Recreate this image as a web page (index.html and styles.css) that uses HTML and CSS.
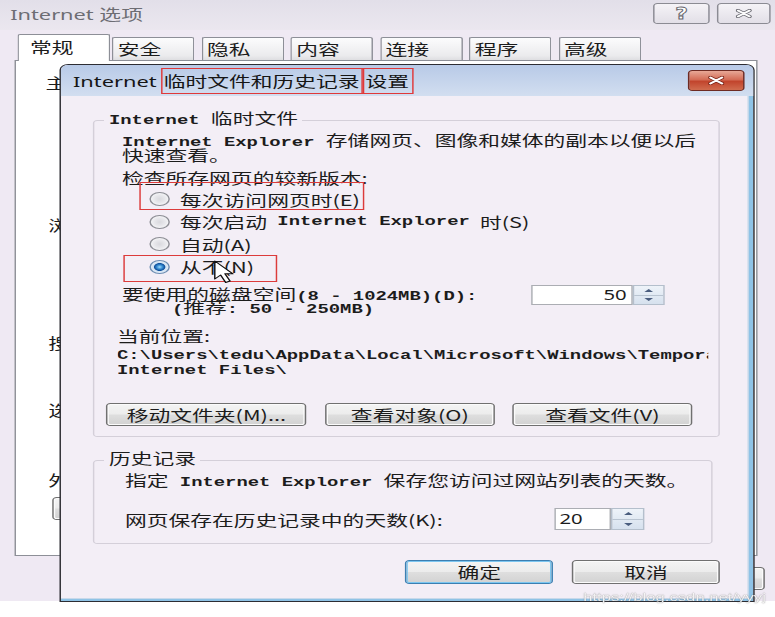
FILE: index.html
```html
<!DOCTYPE html>
<html>
    <head>
        <meta charset="utf-8">
        <title>Internet 选项</title>
        <link rel="stylesheet" href="styles.css">
    </head>
    <body>
        <div class="screen">
            <!-- Internet Options window (behind) -->
            <div class="ie-window">
                <div class="ie-titlebar">
                    <span class="ie-title">Internet 选项</span>
                    <div class="caption-btns">
                        <button class="cap-btn cap-help">?</button>
                        <button class="cap-btn cap-close">
                            <svg width="11" height="9" viewBox="0 0 11 9">
                                <path d="M1.5 1.5 L9.5 7.5 M9.5 1.5 L1.5 7.5" stroke="#6a6a72" stroke-width="3.2" stroke-linecap="round" fill="none" />
                                <path d="M1.5 1.5 L9.5 7.5 M9.5 1.5 L1.5 7.5" stroke="#fdfdfd" stroke-width="1.6" stroke-linecap="round" fill="none" />
                            </svg>
                        </button>
                    </div>
                </div>

                <div class="tabs">
                    <div class="tab tab-active">常规</div>
                    <div class="tab">安全</div>
                    <div class="tab">隐私</div>
                    <div class="tab">内容</div>
                    <div class="tab">连接</div>
                    <div class="tab">程序</div>
                    <div class="tab">高级</div>
                </div>

                <div class="tab-panel">
                    <div class="panel-label sec-home">主页</div>
                    <div class="panel-label sec-history">浏览历史记录</div>
                    <div class="panel-label sec-search">搜索</div>
                    <div class="panel-label sec-tabs">选项卡</div>
                    <div class="panel-label sec-look">外观</div>
                    <button class="btn panel-btn" aria-label="颜色"></button>
                </div>

                <!-- only the edge of the last button shows past the dialog -->
                <div class="ie-footer">
                    <button class="btn" aria-label="确定"></button>
                    <button class="btn" aria-label="取消"></button>
                    <button class="btn" aria-label="应用"></button>
                </div>
            </div>

            <!-- Temporary files and history settings dialog -->
            <div class="dialog">
                <div class="dialog-titlebar">
                    <span class="dialog-title">Internet <span class="mark mark-left">临时文件和历史记录</span><span class="mark mark-right">设置</span></span>
                    <button class="dialog-close">
                        <svg width="11" height="9" viewBox="0 0 11 9">
                            <path d="M1.5 1.5 L9.5 7.5 M9.5 1.5 L1.5 7.5" stroke="#7a2418" stroke-width="3.4" stroke-linecap="round" fill="none" />
                            <path d="M1.5 1.5 L9.5 7.5 M9.5 1.5 L1.5 7.5" stroke="#fff" stroke-width="1.8" stroke-linecap="round" fill="none" />
                        </svg>
                    </button>
                </div>

                <div class="dialog-body">
                    <fieldset class="group cache">
                        <legend><span class="en">Internet </span>临时文件</legend>
                        <p class="cache-desc"><span class="en">Internet Explorer </span>存储网页、图像和媒体的副本以便以后<br>快速查看。</p>
                        <div class="check-title">检查所存网页的较新版本:</div>

                        <div class="radio-row"><span class="radio"></span>每次访问网页时(E)</div>
                        <div class="radio-row"><span class="radio"></span>每次启动<span class="en"> Internet Explorer </span>时(S)</div>
                        <div class="radio-row"><span class="radio"></span>自动(A)</div>
                        <div class="radio-row"><span class="radio checked"></span>从不(N)</div>

                        <div class="disk-row">
                            <div class="disk-text">
                                <div>要使用的磁盘空间<span class="en">(8 - 1024MB)(D):</span></div>
                                <div class="disk-hint"><span class="en">(</span>推荐<span class="en">: 50 - 250MB)</span></div>
                            </div>
                            <div class="spin spin-disk">
                                <div class="spin-value">50</div>
                                <div class="spin-arrows"><span class="spin-up"></span><span class="spin-down"></span></div>
                            </div>
                        </div>

                        <div class="location-title">当前位置:</div>
                        <div class="location-path">C:\Users\tedu\AppData\Local\Microsoft\Windows\Temporary<br>Internet Files\</div>

                        <div class="folder-btns">
                            <button class="btn btn-move">移动文件夹(M)...</button>
                            <button class="btn btn-objects">查看对象(O)</button>
                            <button class="btn btn-files">查看文件(V)</button>
                        </div>
                    </fieldset>

                    <fieldset class="group history">
                        <legend>历史记录</legend>
                        <div class="history-desc">指定<span class="en"> Internet Explorer </span>保存您访问过网站列表的天数。</div>
                        <div class="days-row">
                            <span class="days-label">网页保存在历史记录中的天数(K):</span>
                            <div class="spin spin-days">
                                <div class="spin-value">20</div>
                                <div class="spin-arrows"><span class="spin-up"></span><span class="spin-down"></span></div>
                            </div>
                        </div>
                    </fieldset>

                    <div class="dialog-buttons">
                        <button class="btn btn-default">确定</button>
                        <button class="btn">取消</button>
                    </div>
                </div>

                <!-- red annotation boxes and the mouse pointer -->
                <span class="note-box note-every"></span>
                <span class="note-box note-never"></span>
                <svg class="pointer" width="15" height="24" viewBox="0 0 15 24">
                    <path d="M1 1 L1 19 L5 15 L8.5 22.5 L11.5 21 L8 13.8 L13.5 13.8 Z" fill="#fff" stroke="#111" stroke-width="1" stroke-linejoin="round" />
                </svg>
            </div>

            <div class="watermark">https://blog.csdn.net/yyyj</div>
        </div>
    </body>
</html>
```

FILE: styles.css
```css
* {
    box-sizing: border-box;
}

body {
    margin: 0;
    overflow: hidden;
    background: #fff;
    font-family: "Noto Sans CJK SC", sans-serif;
    font-size: 15px;
    color: #1c1c1c;
}

/* the capture is stretched sideways, so the windows are laid out at
   their own size and widened as a whole */
.screen {
    position: relative;
    width: 534px;
    height: 617px;
    transform: scaleX(1.4513);
    transform-origin: 0 0;
}

.en {
    font-family: "Liberation Mono", monospace;
    font-size: 13px;
    font-weight: bold;
    line-height: 0;
}

button {
    font: inherit;
    color: inherit;
    padding: 0;
    cursor: default;
}

.btn {
    height: 23px;
    border: 1px solid #707070;
    border-radius: 3px;
    background: linear-gradient(#f4f4f4, #ececec 48%, #dedede 52%, #d2d2d2);
    box-shadow: inset 0 0 0 1px #fbfbfb;
    line-height: 20px;
}

.btn-default {
    border-color: #3c7fb1;
    box-shadow: inset 0 0 0 1px #7cc6f0;
}

/* ---------- Internet Options window ---------- */

.ie-window {
    height: 601px;
    background: #efe9f3;
}

.ie-titlebar {
    display: flex;
    height: 30px;
    background: linear-gradient(#e2dfe9, #ebe7ef);
}

.ie-title {
    margin: 3.5px 0 0 7px;
    font-family: "Noto Sans", "Noto Sans CJK SC", sans-serif;
    line-height: 20px;
    color: #6d6d73;
}

.caption-btns {
    display: flex;
    gap: 4.2px;
    margin: 3px 3.3px 0 auto;
}

.cap-btn {
    display: flex;
    align-items: center;
    justify-content: center;
    width: 39.3px;
    height: 21px;
    border: 1px solid #8b8b93;
    border-radius: 3px;
    background: linear-gradient(#f5f3f7, #e2dfe7);
}

.cap-help {
    font-family: "DejaVu Sans", sans-serif;
    font-size: 15px;
    font-weight: bold;
    color: #fff;
    -webkit-text-stroke: 0.8px #68686f;
}

.cap-close {
    width: 37.2px;
}

.tabs {
    position: relative;
    z-index: 1;
    display: flex;
    align-items: flex-end;
    height: 30px;
    padding-left: 11.7px;
}

.tab {
    width: 57px;
    height: 23px;
    margin-left: 4.5px;
    padding: 1px 0 0 3px;
    border: 1px solid #8d8f97;
    border-bottom: none;
    border-radius: 2px 2px 0 0;
    background: linear-gradient(#fcfcfd, #ebebed 80%, #dedee1);
    line-height: 20px;
}

.tab-active {
    width: 64px;
    height: 27px;
    margin: 0 -3px -1px 0;
    padding: 1.5px 0 0 8px;
    background: #fff;
}

.tab-panel {
    width: 512px;
    height: 496px;
    margin-left: 10.3px;
    padding-left: 22px;
    border: 1px solid #8d8f97;
    background: #fff;
}

.panel-label {
    line-height: 20px;
}

.sec-home { margin: 12px 0 0 -2px; }
.sec-history { margin-top: 122px; }
.sec-search { margin-top: 98px; }
.sec-tabs { margin-top: 47px; }
.sec-look { margin-top: 50px; }

.panel-btn {
    display: block;
    width: 80px;
    margin: 7px 0 0 3px;
}

.ie-footer {
    display: flex;
    justify-content: flex-end;
    gap: 7px;
    margin-top: 11px;
    padding-right: 6.8px;
}

.ie-footer .btn {
    width: 75px;
}

/* ---------- settings dialog ---------- */

.dialog {
    position: absolute;
    left: 41.4px;
    top: 64px;
    width: 478.2px;
    height: 538px;
    border: 1px solid #2d2d33;
    border-radius: 6px 6px 0 0;
    background: #f3eef6;
    box-shadow: inset -3px -2px 0 #8fc3e6, inset -4px -3px 0 #c9d9ea;
}

.dialog-titlebar {
    display: flex;
    align-items: center;
    height: 31px;
    padding-left: 7.9px;
    border-radius: 5px 5px 0 0;
    background: linear-gradient(#b8cae7, #d2def0);
}

.dialog-title {
    font-family: "Noto Sans", "Noto Sans CJK SC", sans-serif;
    line-height: 20px;
    color: #151515;
}

.mark {
    padding: 2px 2px;
    outline: 1px solid #e0393a;
}

.mark-left {
    padding-left: 1px;
}

.dialog-close {
    display: flex;
    align-items: center;
    justify-content: center;
    align-self: flex-start;
    width: 38.5px;
    height: 21px;
    margin: 5px 5.9px 0 auto;
    border: 1px solid #6e2a22;
    border-radius: 3px;
    background: linear-gradient(#e8a897, #d46d57 45%, #c2452d 55%, #d06c4f);
}

.dialog-body {
    padding: 12px 22.4px 0 21.7px;
}

.group {
    min-width: 0;
    margin: 0;
    padding: 0 0 10px;
    border: 1px solid #d4cfd9;
    border-radius: 3px;
}

.group legend {
    margin-left: 7px;
    padding: 0 3px 4px;
    line-height: 20px;
}

.cache-desc {
    margin: 0;
    padding-left: 19px;
    line-height: 15px;
}

.check-title {
    margin-top: 6px;
    padding-left: 19px;
    line-height: 20px;
}

.radio-row {
    display: flex;
    align-items: center;
    gap: 7px;
    height: 22.5px;
    padding-left: 38.3px;
}

.radio {
    flex: none;
    width: 13.7px;
    height: 13.7px;
    border: 1px solid #8e8f96;
    border-radius: 50%;
    background: radial-gradient(circle, #d9d9de 0, #e6e6ea 40%, #f7f7f9 80%);
}

.radio.checked {
    border-color: #6f8fb3;
    background: radial-gradient(circle, #a4dcfa 0, #3d93d6 22%, #0d4f9c 42%, #cfe1f2 50%, #f3f7fb 85%);
}

.disk-row {
    display: flex;
    margin-top: 8.5px;
    line-height: 13px;
}

.disk-text {
    flex: 1;
    padding-left: 19px;
}

.disk-hint {
    padding-left: 34.4px;
}

.spin {
    display: flex;
}

.spin-value {
    border: 1px solid #abadb3;
    background: #fff;
    font-family: "Noto Sans", sans-serif;
    font-size: 14px;
}

.spin-arrows {
    display: flex;
    flex-direction: column;
    border: 1px solid #b4bfcc;
    background: linear-gradient(#eef3f9, #d6e1ee);
}

.spin-arrows span {
    display: flex;
    flex: 1;
    align-items: center;
    justify-content: center;
}

.spin-up {
    border-bottom: 1px solid #b9c4d1;
}

.spin-up::before,
.spin-down::before {
    content: "";
    border-left: 3.5px solid transparent;
    border-right: 3.5px solid transparent;
}

.spin-up::before {
    border-bottom: 3.5px solid #4a5d7e;
}

.spin-down::before {
    border-top: 3.5px solid #4a5d7e;
}

.spin-disk {
    height: 20px;
    margin: -1.5px 37px 0 0;
}

.spin-disk .spin-value {
    width: 70px;
    padding-right: 3.4px;
    text-align: right;
    line-height: 18px;
}

.spin-disk .spin-arrows {
    width: 22px;
}

.location-title {
    margin-top: 13.5px;
    padding-left: 15.5px;
    line-height: 20px;
}

.location-path {
    width: 407px;
    margin: 1.5px 0 0 15.5px;
    overflow: hidden;
    white-space: nowrap;
    font-family: "Liberation Mono", monospace;
    font-size: 13px;
    font-weight: bold;
    line-height: 15px;
}

.folder-btns {
    display: flex;
    gap: 12.7px;
    margin: 25.5px 0 0 7.9px;
}

.btn-move { width: 138.5px; }
.btn-objects { width: 116.5px; }
.btn-files { width: 123.4px; }

.history {
    margin: 11px 5.5px 0 0;
    padding-bottom: 13px;
}

.history-desc {
    padding-left: 21px;
    line-height: 16px;
}

.days-row {
    display: flex;
    align-items: center;
    height: 22px;
    margin-top: 20px;
    padding-left: 21px;
}

.days-label {
    width: 296.4px;
}

.spin-days {
    height: 22px;
}

.spin-days .spin-value {
    width: 39px;
    padding-left: 2px;
    line-height: 20px;
}

.spin-days .spin-arrows {
    width: 22.7px;
}

.dialog-buttons {
    display: flex;
    justify-content: flex-end;
    gap: 13px;
    margin-top: 16px;
}

.dialog-buttons .btn {
    width: 102px;
    height: 24px;
}

.note-box {
    position: absolute;
    border: 1px solid #dc3b3b;
}

.note-every {
    left: 54.1px;
    top: 117px;
    width: 154.4px;
    height: 28px;
}

.note-never {
    left: 42.4px;
    top: 190px;
    width: 106.1px;
    height: 27px;
}

.pointer {
    position: absolute;
    left: 105px;
    top: 195px;
}

.watermark {
    position: absolute;
    left: 401.8px;
    top: 591px;
    font-family: "Liberation Sans", sans-serif;
    font-size: 11.5px;
    color: rgba(255, 255, 255, 0.9);
    text-shadow: 0 0 1px rgba(70, 70, 70, 0.8);
}
```
